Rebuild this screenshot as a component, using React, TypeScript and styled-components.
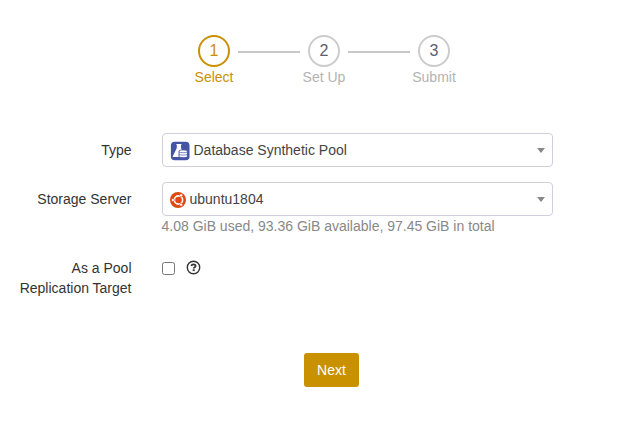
import React, { useState } from "react";
import styled, { createGlobalStyle } from "styled-components";

const GlobalStyle = createGlobalStyle`
  *, *::before, *::after { box-sizing: border-box; }
  body {
    margin: 0;
    background: #fff;
    color: #333;
    font: 14px/20px "Liberation Sans", Arial, sans-serif;
  }
`;

const Page = styled.main`
  width: 623px;
  height: 423px;
  padding-top: 35px;
  overflow: hidden;
`;

const Stepper = styled.ol`
  display: flex;
  gap: 8px;
  list-style: none;
  margin: 0 0 46px 198px;
  padding: 0;
`;

const Step = styled.li<{ $active?: boolean }>`
  display: flex;
  flex-direction: column;
  align-items: center;
  width: 32px;
  color: ${(p) => (p.$active ? "#c99000" : "#b3b3b3")};
`;

const StepCircle = styled.span<{ $active?: boolean }>`
  display: flex;
  justify-content: center;
  width: 32px;
  height: 32px;
  border: 2px solid ${(p) => (p.$active ? "#c99000" : "#cccccc")};
  border-radius: 50%;
  font-size: 16px;
  line-height: 27px;
  color: ${(p) => (p.$active ? "#c99000" : "#5d5d70")};
`;

const StepLabel = styled.span`
  white-space: nowrap;
`;

const StepLine = styled.li`
  width: 62px;
  height: 2px;
  margin-top: 16px;
  background: #c8c8c8;
`;

const Form = styled.form`
  display: grid;
  grid-template-columns: 131.5px 391px;
  column-gap: 30px;
`;

const Label = styled.label`
  padding-top: 7px;
  text-align: right;
`;

const Field = styled.div<{ $height: number }>`
  height: ${(p) => p.$height}px;
`;

const SelectBox = styled.button`
  display: flex;
  align-items: center;
  width: 391px;
  height: 34px;
  padding: 0 7px;
  border: 1px solid #d0d0dc;
  border-radius: 4px;
  background: #fff;
  color: #444;
  font: inherit;
  text-align: left;

  svg {
    margin-top: 2px;
  }
`;

const SelectText = styled.span`
  flex: 1;
  margin-left: 4px;
`;

const Caret = styled.span`
  border: 4px solid transparent;
  border-top: 5px solid #888;
  border-bottom: 0;
`;

const Hint = styled.div`
  color: #888;
`;

const CheckRow = styled.div`
  display: flex;
  align-items: center;
  gap: 11px;
  padding-top: 9px;
`;

const Checkbox = styled.input`
  width: 13px;
  height: 13px;
  margin: 1px 0 0;
`;

const Actions = styled.div`
  grid-column: 1 / -1;
  padding-left: 304px;
`;

const NextButton = styled.button`
  width: 55px;
  height: 34px;
  padding: 0;
  border: 0;
  border-radius: 3px;
  background: #c99000;
  color: #fff;
  font: inherit;
`;

const PoolIcon = () => (
  <svg width="20" height="20" viewBox="0 0 20 20">
    <rect x="0.9" y="0.7" width="18.6" height="18.6" rx="3.8" fill="#4355a4" />
    <path d="M6.4 3h5v1.1H11v3l4 9H3.2c-.5 0-.6-.4-.4-.8L6.8 7V4.1h-.4z" fill="#fff" />
    <path
      d="M9 9.9c0-1.3 8.4-1.3 8.4 0v5.7c0 1.4-8.4 1.4-8.4 0z"
      fill="#fff"
      stroke="#4355a4"
      strokeWidth="0.9"
    />
    <path
      d="M9 11c1.4.9 7 .9 8.4 0M9 13.4c1.4.9 7 .9 8.4 0"
      fill="none"
      stroke="#4355a4"
      strokeWidth="0.7"
    />
  </svg>
);

const UbuntuIcon = () => (
  <svg width="16" height="16" viewBox="0 0 16 16">
    <circle cx="8" cy="8" r="8" fill="#dd4814" />
    <circle cx="8.5" cy="8" r="4.1" fill="none" stroke="#fff" strokeWidth="1.6" />
    <g fill="#fff" stroke="#dd4814" strokeWidth="0.6">
      <circle cx="2.9" cy="8" r="1.5" />
      <circle cx="11.1" cy="3.3" r="1.5" />
      <circle cx="11.1" cy="12.7" r="1.5" />
    </g>
  </svg>
);

const HelpIcon = () => (
  <svg width="15" height="15" viewBox="0 0 15 15">
    <circle cx="7.5" cy="7.5" r="6.2" fill="none" stroke="#333" strokeWidth="1.4" />
    <path
      d="M5.3 6c.3-1.2 1.1-1.7 2.2-1.7 1.2 0 2.1.6 2.1 1.6 0 1.3-1.9 1.3-1.9 2.6"
      fill="none"
      stroke="#333"
      strokeWidth="1.8"
    />
    <rect x="6.7" y="9.3" width="2" height="1.8" fill="#333" />
  </svg>
);

const steps = ["Select", "Set Up", "Submit"];

export default function App() {
  const [target, setTarget] = useState(false);
  return (
    <>
      <GlobalStyle />
      <Page>
        <Stepper>
          {steps.map((name, i) => (
            <React.Fragment key={name}>
              {i > 0 && <StepLine aria-hidden />}
              <Step $active={i === 0}>
                <StepCircle $active={i === 0}>{i + 1}</StepCircle>
                <StepLabel>{name}</StepLabel>
              </Step>
            </React.Fragment>
          ))}
        </Stepper>
        <Form onSubmit={(e) => e.preventDefault()}>
          <Label htmlFor="type">Type</Label>
          <Field $height={49}>
            <SelectBox id="type" type="button">
              <PoolIcon />
              <SelectText>Database Synthetic Pool</SelectText>
              <Caret />
            </SelectBox>
          </Field>
          <Label htmlFor="server">Storage Server</Label>
          <Field $height={69}>
            <SelectBox id="server" type="button">
              <UbuntuIcon />
              <SelectText>ubuntu1804</SelectText>
              <Caret />
            </SelectBox>
            <Hint>4.08 GiB used, 93.36 GiB available, 97.45 GiB in total</Hint>
          </Field>
          <Label htmlFor="target">
            As a Pool
            <br />
            Replication Target
          </Label>
          <Field $height={102}>
            <CheckRow>
              <Checkbox
                id="target"
                type="checkbox"
                checked={target}
                onChange={(e) => setTarget(e.target.checked)}
              />
              <HelpIcon />
            </CheckRow>
          </Field>
          <Actions>
            <NextButton type="submit">Next</NextButton>
          </Actions>
        </Form>
      </Page>
    </>
  );
}
